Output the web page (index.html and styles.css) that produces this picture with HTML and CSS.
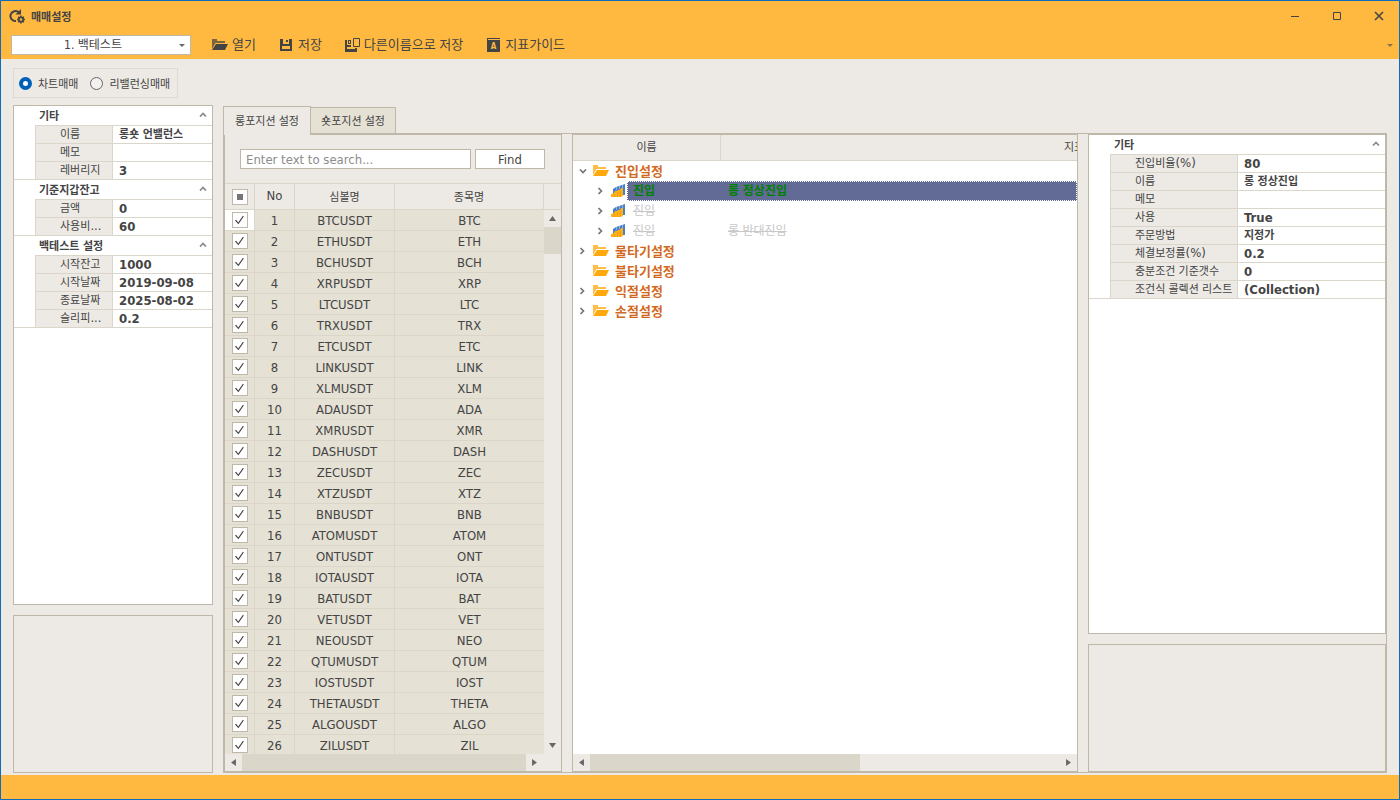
FILE: index.html
```html
<!DOCTYPE html>
<html lang="ko">
<head>
<meta charset="utf-8">
<title>매매설정</title>
<link rel="stylesheet" href="styles.css">
</head>
<body>
<svg class="defs" aria-hidden="true">
  <symbol id="folder" viewBox="0 0 16 14"><path class="folder-back" d="M0 1h5v2h8v2H3.500L0 11z"/><path class="folder-front" d="M4 6h12l-3 6H0z"/></symbol>
  <symbol id="bars" viewBox="0 0 16 14"><path fill="#4a80c8" d="M2 5l3-2 3-1 3-1 3-1v11H2z"/><path fill="#8fb2e0" d="M5 3v3h1V3zM8 2v3h1V2zM11 1v3h1V1z"/><path fill="#ffb115" d="M0 10l3-1 1-2 2 0 1-1 2 0 1-2 2 0v8l-3 1H0z"/><path fill="none" stroke="#f09c0c" d="M3.500 10v3M6.500 8v5M9.500 7v6"/></symbol>
  <symbol id="up" viewBox="0 0 8 5"><path fill="none" stroke="#888" stroke-width="1.700" d="M1 4.500l3-3 3 3"/></symbol>
  <symbol id="right" viewBox="0 0 5 8"><path fill="none" stroke="#777" stroke-width="1.700" d="M.5 1l3 3-3 3"/></symbol>
  <symbol id="down" viewBox="0 0 8 5"><path fill="none" stroke="#777" stroke-width="1.700" d="M1 .5l3 3 3-3"/></symbol>
</svg>
<div class="window">
  <header class="titlebar">
    <svg class="app-icon" viewBox="0 0 16 15" aria-hidden="true"><path d="M7 12A5 5 0 1 1 10 3.500" fill="none" stroke="#444" stroke-width="2"/><path d="M12 0v5.500H6.500z" fill="#444"/><circle cx="12" cy="10.500" r="2.200" fill="none" stroke="#444" stroke-width="1.800"/><path d="M12 6.500v1.500M12 13v1.500M8 10.500h1.500M14.500 10.500H16M9.200 7.700l1 1M13.800 12.300l1 1M9.200 13.300l1-1M13.800 8.700l1-1" stroke="#444" stroke-width="1.500"/></svg>
    <h1 class="title">매매설정</h1>
    <button class="win-btn" aria-label="최소화"><svg viewBox="0 0 10 10"><path d="M1 5.500h8"/></svg></button>
    <button class="win-btn" aria-label="최대화"><svg viewBox="0 0 10 10"><path d="M1.500 1.500h7v7h-7z"/></svg></button>
    <button class="win-btn" aria-label="닫기"><svg viewBox="0 0 10 10"><path class="thick" d="M1 1l8 8M9 1L1 9"/></svg></button>
  </header>
  <nav class="toolbar">
    <div class="combo"><select aria-label="전략"><option>1. 백테스트</option></select></div>
    <button class="tool"><svg class="dark" viewBox="0 0 16 14"><use href="#folder"/></svg><span>열기</span></button>
    <button class="tool"><svg viewBox="0 0 16 14"><path fill="#444" fill-rule="evenodd" d="M2 1h12v12H2zM4 8v3h8V8zM5 1v5h6V1zM8 2h2v2H8z"/></svg><span>저장</span></button>
    <button class="tool"><svg viewBox="0 0 16 14"><path fill="#444" fill-rule="evenodd" d="M1 2h2v5h4v2H3v2h8v-1h2v4H1zM4 2h3v4H4zM5 3v2h1V3z"/><path fill="none" stroke="#444" d="M9.500 .5h6v8h-6z"/></svg><span>다른이름으로 저장</span></button>
    <button class="tool"><svg viewBox="0 0 16 14"><path fill="#444" d="M2 0h13v1H3v1h12v12H2z"/><text x="8.500" y="11" text-anchor="middle" class="icon-letter">A</text></svg><span>지표가이드</span></button>
    <button class="more" aria-label="더보기"><svg viewBox="0 0 6 3"><path d="M0 0h6L3 3z" fill="#444"/></svg></button>
  </nav>

  <main class="content">
    <div class="modes" role="radiogroup" aria-label="매매 방식">
      <label><input type="radio" name="mode" checked>차트매매</label>
      <label><input type="radio" name="mode">리밸런싱매매</label>
    </div>
    <div class="columns">
      <aside class="left">
        <section class="panel props">
          <details class="group" open><summary>기타<svg viewBox="0 0 8 5"><use href="#up"/></svg></summary>
            <dl><dt>이름</dt><dd>롱숏 언밸런스</dd><dt>메모</dt><dd></dd><dt>레버리지</dt><dd class="num">3</dd></dl></details>
          <details class="group" open><summary>기준지갑잔고<svg viewBox="0 0 8 5"><use href="#up"/></svg></summary>
            <dl><dt>금액</dt><dd class="num">0</dd><dt>사용비<span class="latin">...</span></dt><dd class="num">60</dd></dl></details>
          <details class="group" open><summary>백테스트 설정<svg viewBox="0 0 8 5"><use href="#up"/></svg></summary>
            <dl><dt>시작잔고</dt><dd class="num">1000</dd><dt>시작날짜</dt><dd class="num">2019-09-08</dd><dt>종료날짜</dt><dd class="num">2025-08-02</dd><dt>슬리피<span class="latin">...</span></dt><dd class="num">0.2</dd></dl></details>
        </section>
        <section class="panel help"></section>
      </aside>

      <section class="workspace">
        <div class="tabs" role="tablist"><button class="tab active" role="tab" aria-selected="true">롱포지션 설정</button><button class="tab" role="tab" aria-selected="false">숏포지션 설정</button></div>
        <div class="page">
          <section class="panel symbols">
            <form class="search"><input type="text" placeholder="Enter text to search..." aria-label="검색"><button type="button">Find</button></form>
            <div class="grid">
              <div class="rows">
                <table>
                  <colgroup><col class="c-check"><col class="c-no"><col class="c-symbol"><col></colgroup>
                  <thead><tr><th><input type="checkbox" class="check mixed" aria-label="전체 선택"></th><th class="latin">No</th><th>심볼명</th><th>종목명</th></tr></thead>
                  <tbody id="symbols"></tbody>
                </table>
              </div>
              <div class="vscroll"><i class="arrow n"></i><b class="thumb"></b><i class="arrow s"></i></div>
            </div>
            <div class="hscroll"><i class="arrow w"></i><b class="thumb"></b><i class="arrow e"></i></div>
          </section>

          <section class="panel strategy">
            <div class="tree-head"><span class="name">이름</span><span class="indicator"><span>지표</span></span></div>
            <ul class="tree">
              <li><div class="node"><span class="exp"><svg class="v" viewBox="0 0 8 5"><use href="#down"/></svg></span><svg class="icon" viewBox="0 0 16 14"><use href="#folder"/></svg><span class="text">진입설정</span></div>
                <ul>
                  <li><div class="node"><span class="exp"><svg viewBox="0 0 5 8"><use href="#right"/></svg></span><svg class="icon" viewBox="0 0 16 14"><use href="#bars"/></svg><span class="cells selected"><span>진입</span><span>롱 정상진입</span></span></div></li>
                  <li><div class="node"><span class="exp"><svg viewBox="0 0 5 8"><use href="#right"/></svg></span><svg class="icon" viewBox="0 0 16 14"><use href="#bars"/></svg><span class="cells off"><span><s>진입</s></span></span></div></li>
                  <li><div class="node"><span class="exp"><svg viewBox="0 0 5 8"><use href="#right"/></svg></span><svg class="icon" viewBox="0 0 16 14"><use href="#bars"/></svg><span class="cells off"><span><s>진입</s></span><span><s>롱 반대진입</s></span></span></div></li>
                </ul></li>
              <li><div class="node"><span class="exp"><svg viewBox="0 0 5 8"><use href="#right"/></svg></span><svg class="icon" viewBox="0 0 16 14"><use href="#folder"/></svg><span class="text">물타기설정</span></div></li>
              <li><div class="node"><span class="exp"></span><svg class="icon" viewBox="0 0 16 14"><use href="#folder"/></svg><span class="text">불타기설정</span></div></li>
              <li><div class="node"><span class="exp"><svg viewBox="0 0 5 8"><use href="#right"/></svg></span><svg class="icon" viewBox="0 0 16 14"><use href="#folder"/></svg><span class="text">익절설정</span></div></li>
              <li><div class="node"><span class="exp"><svg viewBox="0 0 5 8"><use href="#right"/></svg></span><svg class="icon" viewBox="0 0 16 14"><use href="#folder"/></svg><span class="text">손절설정</span></div></li>
            </ul>
            <div class="hscroll"><i class="arrow w"></i><b class="thumb"></b><i class="arrow e"></i></div>
          </section>

          <aside class="right">
            <section class="panel props">
              <details class="group" open><summary>기타<svg viewBox="0 0 8 5"><use href="#up"/></svg></summary>
                <dl><dt>진입비율<span class="latin">(%)</span></dt><dd class="num">80</dd><dt>이름</dt><dd>롱 정상진입</dd><dt>메모</dt><dd></dd><dt>사용</dt><dd class="num">True</dd><dt>주문방법</dt><dd>지정가</dd><dt>체결보정률<span class="latin">(%)</span></dt><dd class="num">0.2</dd><dt>충분조건 기준갯수</dt><dd class="num">0</dd><dt>조건식 콜렉션 리스트</dt><dd class="num">(Collection)</dd></dl></details>
            </section>
            <section class="panel help"></section>
          </aside>
        </div>
      </section>
    </div>
  </main>
  <footer class="status"></footer>
</div>
<script src="app.js"></script>
</body>
</html>
```

FILE: styles.css
```css
:root {
  --accent: #ffb941;
  --bg: #edeae5;
  --line: #bfb8a8;
  --soft: #dad6c9;
  --row: #e5e1d5;
  --ink: #444;
  --folder-back: #ffbd49;
  --folder-front: #ffa90f;
}
* { box-sizing: border-box; }
body, h1, ul, dl, dd { margin: 0; padding: 0; }
body, button, input, select {
  font-family: "DejaVu Sans Condensed", "Noto Sans CJK KR", sans-serif;
  font-size: 11px;
  color: var(--ink);
}
ul { list-style: none; }
svg { display: block; flex: none; }
button { border: 0; background: none; padding: 0; }
.defs { position: absolute; width: 0; height: 0; }
.latin { font-size: 13px; line-height: 1; }

.window { display: flex; flex-direction: column; height: 100vh; border: 1px solid #0f6cbd; background: var(--bg); }
.titlebar { display: flex; align-items: center; height: 30px; padding-left: 8px; background: var(--accent); }
.app-icon { width: 16px; height: 15px; }
.title { flex: 1; margin-left: 6px; padding-bottom: 1px; font-size: 11px; font-weight: bold; }
.win-btn { display: flex; align-items: center; justify-content: center; width: 42px; height: 30px; }
.win-btn:last-child { width: 41px; }
.win-btn svg { width: 10px; height: 10px; fill: none; stroke: var(--ink); }
.win-btn .thick { stroke-width: 1.6; }

.toolbar { display: flex; align-items: center; height: 28px; padding: 0 6px 0 10px; background: var(--accent); }
.combo { position: relative; width: 180px; height: 20px; margin-right: 21px; }
.combo::after { content: ""; position: absolute; right: 6px; top: 9px; border: 3px solid transparent; border-top-color: #666; border-bottom: 0; }
.combo select { appearance: none; width: 100%; height: 100%; padding: 0 16px 0 0; border: 1px solid var(--line); border-radius: 0; background: #fff; text-align: center; text-align-last: center; font-size: 12px; }
.tool { display: flex; align-items: center; gap: 4px; margin-right: 22px; font-size: 13px; white-space: nowrap; }
.tool span { padding-bottom: 3px; }
.tool svg { width: 16px; height: 14px; }
.icon-letter { fill: var(--accent); font: bold 8px "DejaVu Sans Condensed", sans-serif; }
.more { margin-left: auto; }
.more svg { width: 6px; height: 3px; opacity: .6; }
.folder-back { fill: var(--folder-back); }
.folder-front { fill: var(--folder-front); }
.dark { --folder-back: #7b6440; --folder-front: #444; }

.content { flex: 1; min-height: 0; display: flex; flex-direction: column; padding: 9px 12px 2px; }
.modes { display: flex; align-items: center; align-self: flex-start; gap: 12px; height: 30px; padding: 0 7px 0 5px; border: 1px solid #dddad6; }
.modes label { display: flex; align-items: center; gap: 6px; }
.modes input { appearance: none; width: 13px; height: 13px; margin: 0; border: 1px solid #666; border-radius: 50%; background: #f3f2f0; }
.modes input:checked { border: 4px solid #005fb8; background: #fff; }
.columns { flex: 1; min-height: 0; display: flex; gap: 10px; margin-top: 7px; }
.panel { border: 1px solid var(--line); }
.left { display: flex; flex-direction: column; gap: 10px; width: 200px; }
.left .help { height: 158px; }
.props { flex: 1; background: #fff; }
.group { border-bottom: 1px solid var(--soft); }
.group summary { display: flex; align-items: center; justify-content: space-between; height: 19px; padding: 0 5px 2px 25px; font-weight: bold; list-style: none; }
.group summary svg { width: 8px; height: 5px; }
.group dl { display: grid; grid-template-columns: 77px 1fr; margin-left: 21px; border-left: 1px solid var(--soft); }
.group dt, .group dd { height: 18px; line-height: 18px; border-top: 1px solid var(--soft); white-space: nowrap; overflow: hidden; }
.group dt { padding-left: 24px; background: var(--bg); border-right: 1px solid var(--soft); }
.group dd { padding-left: 6px; font-weight: bold; }
.group .num { font-size: 13px; line-height: 17px; }

.workspace { flex: 1; min-width: 0; display: flex; flex-direction: column; padding-top: 1px; }
.tabs { display: flex; align-items: flex-end; height: 27px; }
.tab { height: 26px; width: 85px; padding-bottom: 2px; border: 1px solid var(--line); border-left: 0; border-bottom: 0; background: var(--row); }
.tab.active { position: relative; height: 29px; width: 88px; padding-bottom: 3px; margin-bottom: -2px; border-left: 1px solid var(--line); background: var(--bg); }
.page { flex: 1; min-height: 0; display: flex; gap: 10px; border: 1px solid var(--line); }
.symbols { display: flex; flex-direction: column; width: 338px; }
.search { display: flex; gap: 4px; height: 48px; padding: 14px 16px 0 15px; }
.search input, .search button { height: 20px; border: 1px solid var(--line); background: #fff; font-size: 13px; }
.search input { flex: 1; min-width: 0; padding: 0 5px; }
.search input::placeholder { color: #8c8c8c; }
.search button { width: 70px; }
.grid { flex: 1; min-height: 0; display: flex; border-top: 1px solid var(--soft); }
.rows { flex: 1; overflow: hidden; background: var(--row); }
.rows table { width: 100%; table-layout: fixed; border-collapse: separate; border-spacing: 0; }
.c-check { width: 30px; }
.c-no { width: 40px; }
.c-symbol { width: 100px; }
.rows th, .rows td { padding: 0; text-align: center; font-weight: normal; border-right: 1px solid var(--soft); border-bottom: 1px solid var(--soft); }
.rows th { height: 26px; padding-bottom: 2px; background: var(--bg); }
.rows th:first-child { padding-bottom: 0; }
.rows td { height: 21px; padding-top: 2px; line-height: 18px; font-size: 13px; }
.rows td:first-child { padding-top: 0; }
.rows td:last-child { border-right: 0; }
.rows tbody tr:first-child td:first-child { background: #fff; }
.check { appearance: none; display: flex; align-items: center; justify-content: center; width: 16px; height: 16px; margin: 0 auto; border: 1px solid var(--line); background: #fff; }
.check:checked::after { content: ""; width: 9px; height: 9px; background: #444; clip-path: polygon(0 55%, 12% 48%, 36% 78%, 88% 4%, 98% 10%, 38% 98%); }
.mixed::after { content: ""; width: 6px; height: 6px; background: #777; }
.arrow { position: relative; flex: none; width: 17px; height: 17px; }
.arrow::after { content: ""; position: absolute; inset: 5px; background: #666; }
.n::after { clip-path: polygon(0 85%, 50% 15%, 100% 85%); }
.s::after { clip-path: polygon(0 15%, 50% 85%, 100% 15%); }
.w::after { clip-path: polygon(85% 0, 15% 50%, 85% 100%); }
.e::after { clip-path: polygon(15% 0, 85% 50%, 15% 100%); }
.vscroll { display: flex; flex-direction: column; width: 17px; background: linear-gradient(var(--soft), var(--soft)) 0 25px / 100% 1px no-repeat; padding-top: 26px; }
.vscroll .thumb { height: 27px; background: var(--soft); }
.vscroll .s { margin-top: auto; }
.hscroll { flex: none; display: flex; height: 17px; background: var(--bg); }
.hscroll .thumb { background: var(--soft); }
.hscroll .e { margin-left: auto; }
.symbols .hscroll { padding-right: 18px; }
.symbols .hscroll .thumb { flex: 1; }

.strategy { flex: 1; min-width: 0; display: flex; flex-direction: column; background: #fff; }
.tree-head { display: flex; height: 26px; line-height: 26px; background: var(--bg); border-bottom: 1px solid var(--soft); }
.tree-head .name { width: 148px; border-right: 1px solid var(--soft); text-align: center; }
.tree-head .indicator { flex: 1; display: flex; justify-content: flex-end; }
.tree-head .indicator span { width: 13px; overflow: hidden; white-space: nowrap; }
.tree { flex: 1; min-height: 0; font-size: 13px; }
.tree ul { padding-left: 18px; }
.node { display: flex; align-items: center; height: 20px; }
.exp { display: flex; justify-content: center; width: 20px; padding-right: 1px; }
.exp svg { width: 5px; height: 8px; }
.exp .v { width: 8px; height: 5px; }
.icon { width: 16px; height: 14px; }
.text { margin-left: 6px; padding-bottom: 2px; color: #d2691e; font-weight: bold; }
.cells { flex: 1; display: flex; align-items: center; height: 20px; line-height: 16px; border: 1px solid transparent; padding: 0 0 1px 5px; font-size: 12px; }
.cells span { width: 95px; white-space: nowrap; }
.selected { background: #626b96; border: 1px dotted #fff; color: #008000; font-weight: bold; }
.off { color: #c8c8c8; }
.strategy .thumb { width: 270px; }

.right { display: flex; flex-direction: column; gap: 10px; width: 298px; }
.right .help { height: 128px; }
.right dl { grid-template-columns: 127px 1fr; }
.status { flex: none; height: 24px; background: var(--accent); }
```

FILE: app.js
```js
const coins = ["BTC", "ETH", "BCH", "XRP", "LTC", "TRX", "ETC", "LINK", "XLM", "ADA", "XMR", "DASH", "ZEC", "XTZ", "BNB", "ATOM", "ONT", "IOTA", "BAT", "VET", "NEO", "QTUM", "IOST", "THETA", "ALGO", "ZIL"];
document.getElementById("symbols").innerHTML = coins.map((coin, i) =>
  `<tr><td><input type="checkbox" class="check" checked aria-label="${coin}"></td><td>${i + 1}</td><td>${coin}USDT</td><td>${coin}</td></tr>`
).join("");
```
